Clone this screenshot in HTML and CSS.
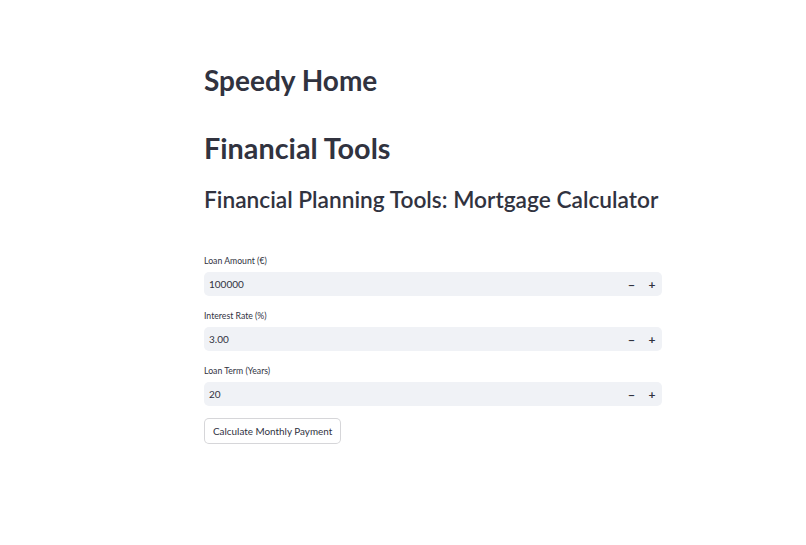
FILE: index.html
```html
<!DOCTYPE html>
<html lang="en">
<head>
<meta charset="utf-8">
<title>Speedy Home</title>
<link rel="stylesheet" href="styles.css">
</head>
<body>
<main class="page">
  <h1 class="title">Speedy Home</h1>
  <h1 class="title second">Financial Tools</h1>
  <h2 class="header">Financial Planning Tools: Mortgage Calculator</h2>

  <div class="fields">
    <div class="field">
      <label class="label">Loan Amount (€)</label>
      <div class="numinput">
        <span class="value">100000</span>
        <span class="steps"><span class="step">&minus;</span><span class="step">+</span></span>
      </div>
    </div>
    <div class="field">
      <label class="label">Interest Rate (%)</label>
      <div class="numinput">
        <span class="value">3.00</span>
        <span class="steps"><span class="step">&minus;</span><span class="step">+</span></span>
      </div>
    </div>
    <div class="field">
      <label class="label">Loan Term (Years)</label>
      <div class="numinput">
        <span class="value">20</span>
        <span class="steps"><span class="step">&minus;</span><span class="step">+</span></span>
      </div>
    </div>
    <div class="actions">
      <button class="btn">Calculate Monthly Payment</button>
    </div>
  </div>
</main>
</body>
</html>
```
FILE: styles.css
```css
html, body {
  margin: 0;
  padding: 0;
  background: #ffffff;
}
body {
  font-family: Lato, "Noto Sans", sans-serif;
  color: #31333f;
}
.page {
  width: 458px;
  margin-left: 204px;
  padding-top: 63px;
  display: flex;
  flex-direction: column;
}
.title {
  margin: 0;
  font-size: 28px;
  line-height: 34px;
  font-weight: 700;
  white-space: nowrap;
}
.title.second {
  margin-top: 34px;
  font-size: 28.8px;
}
.header {
  margin: 21px 0 0;
  font-size: 22.7px;
  line-height: 28px;
  font-weight: 600;
  white-space: nowrap;
}
.fields {
  margin-top: 41px;
  display: flex;
  flex-direction: column;
  gap: 14px;
}
.field {
  display: flex;
  flex-direction: column;
  gap: 5px;
}
.label {
  font-size: 8.7px;
  line-height: 12px;
  color: #31333f;
}
.numinput {
  height: 24px;
  background: #f0f2f6;
  border-radius: 5px;
  display: flex;
  align-items: center;
  justify-content: space-between;
  padding: 0 0 0 5px;
}
.value {
  font-size: 10px;
  color: #31333f;
}
.steps {
  display: flex;
  height: 100%;
}
.step {
  width: 21px;
  display: flex;
  align-items: center;
  justify-content: center;
  font-size: 12px;
  font-weight: 700;
  color: #31333f;
}
.step:last-child {
  width: 20px;
}
.actions {
  margin-top: -2px;
}
.btn {
  font-family: inherit;
  font-size: 9.9px;
  color: #31333f;
  background: #ffffff;
  border: 1px solid rgba(49, 51, 63, 0.2);
  border-radius: 5px;
  height: 26px;
  padding: 0 8px;
}
```
